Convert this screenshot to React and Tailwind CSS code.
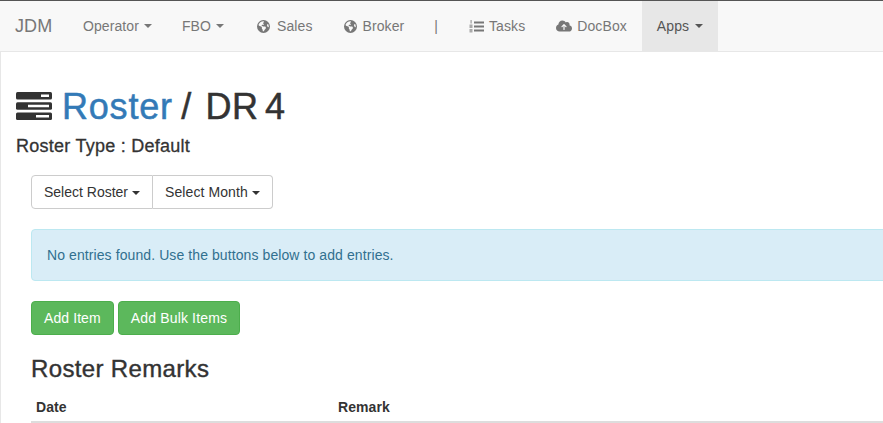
import { FaEarthAmericas, FaCloudArrowUp } from "react-icons/fa6"

function Caret({ className = "ml-[5px]" }) {
  return <span className={`inline-block align-middle w-0 h-0 border-x-4 border-t-4 border-x-transparent border-t-current ${className}`} />
}

function NavItem({ icon, caret, active, children }) {
  return (
    <a className={`flex items-center px-[15px] h-[50px] ${active ? "bg-[#e7e7e7] text-[#555]" : "text-[#777]"}`}>
      {icon}
      <span>{children}</span>
      {caret && <Caret className={active ? "ml-[6px]" : "ml-[5px]"} />}
    </a>
  )
}

function TasksIcon() {
  return (
    <svg width="15" height="15" viewBox="0 0 15 15" className="ml-[1px] mr-[5px] shrink-0 text-[#777]" fill="currentColor">
      <rect x="5" y="2.5" width="10" height="2" />
      <rect x="5" y="6.5" width="10" height="2" />
      <rect x="5" y="10.5" width="10" height="2" />
      <rect x="1.5" y="1" width="1.2" height="3.5" opacity="0.7" />
      <rect x="0.5" y="5.5" width="3" height="3.5" opacity="0.6" />
      <rect x="0.5" y="10" width="3" height="3.5" opacity="0.6" />
    </svg>
  )
}

function ServerIcon() {
  return (
    <svg width="36" height="28" viewBox="0 0 36 28" className="shrink-0 mb-[3px] text-[#333]">
      <rect x="0" y="0" width="36" height="7.5" rx="1.5" fill="currentColor" />
      <rect x="0" y="10.25" width="36" height="7.5" rx="1.5" fill="currentColor" />
      <rect x="0" y="20.5" width="36" height="7.5" rx="1.5" fill="currentColor" />
      <rect x="25" y="2.5" width="8" height="2.5" fill="#fff" />
      <rect x="12" y="12.75" width="21" height="2.5" fill="#fff" />
      <rect x="20" y="23" width="13" height="2.5" fill="#fff" />
    </svg>
  )
}

export default function App() {
  return (
    <div className="w-[883px] h-[423px] overflow-hidden bg-white text-[#333] text-[14px] tracking-[0.09px] font-['Liberation_Sans',Arial,sans-serif]">
      <nav className="flex items-center h-[52px] bg-[#f8f8f8] border-t border-t-[#555] border-b border-b-[#e7e7e7] pl-[15px]">
        <a className="text-[18px] text-[#777] w-[53px]">JDM</a>
        <NavItem caret>Operator</NavItem>
        <NavItem caret>FBO</NavItem>
        <NavItem icon={<FaEarthAmericas className="w-[13px] h-[13px] ml-[3px] mr-[7px]" />}>Sales</NavItem>
        <NavItem icon={<FaEarthAmericas className="w-[13px] h-[13px] ml-[1px] mr-[6px]" />}>Broker</NavItem>
        <NavItem>|</NavItem>
        <NavItem icon={<TasksIcon />}>Tasks</NavItem>
        <NavItem icon={<FaCloudArrowUp className="w-[16px] h-[14px] ml-[1px] mr-[5px]" />}>DocBox</NavItem>
        <NavItem caret active>Apps</NavItem>
      </nav>
      <div className="border-l border-l-[#e7e7e7] pl-[15px] pt-[33px] h-[371px]">
        <h1 className="flex items-center gap-[10px] h-[44px] text-[36px] leading-[40px] tracking-[0.5px] [-webkit-text-stroke:0.5px_currentColor]">
          <ServerIcon />
          <span>
            <a className="text-[#337ab7] tracking-[0.8px] mr-[-2px]">Roster</a> <span className="mr-[3px]">/</span> <span className="[word-spacing:-4px]">DR 4</span>
          </span>
        </h1>
        <h4 className="mt-[7px] text-[18px] leading-[20px] tracking-[0.25px] [-webkit-text-stroke:0.3px_currentColor]">Roster Type : Default</h4>
        <div className="w-[900px] pl-[15px]">
          <div className="flex mt-[19px]">
            <button className="h-[34px] px-[12px] bg-white border border-[#ccc] rounded-l tracking-normal">Select Roster<Caret className="ml-[4px]" /></button>
            <button className="h-[34px] px-[12px] bg-white border border-[#ccc] border-l-0 rounded-r">Select Month<Caret className="ml-[4px]" /></button>
          </div>
          <div className="mt-[20px] h-[52px] flex items-center px-[15px] bg-[#d9edf7] border border-[#bce8f1] rounded text-[#31708f]">
            No entries found. Use the buttons below to add entries.
          </div>
          <div className="flex gap-[4px] mt-[20px]">
            <button className="h-[34px] px-[12px] bg-[#5cb85c] border border-[#4cae4c] rounded text-white">Add Item</button>
            <button className="h-[34px] px-[12px] bg-[#5cb85c] border border-[#4cae4c] rounded text-white tracking-[0.16px]">Add Bulk Items</button>
          </div>
          <h3 className="mt-[20px] text-[24px] leading-[27px] tracking-[0.35px] [-webkit-text-stroke:0.4px_currentColor]">Roster Remarks</h3>
          <div className="flex mt-[12px] h-[29px] items-center border-b-2 border-[#ddd] font-bold">
            <div className="w-[307px] pl-[5px]">Date</div>
            <div>Remark</div>
          </div>
        </div>
      </div>
    </div>
  )
}
